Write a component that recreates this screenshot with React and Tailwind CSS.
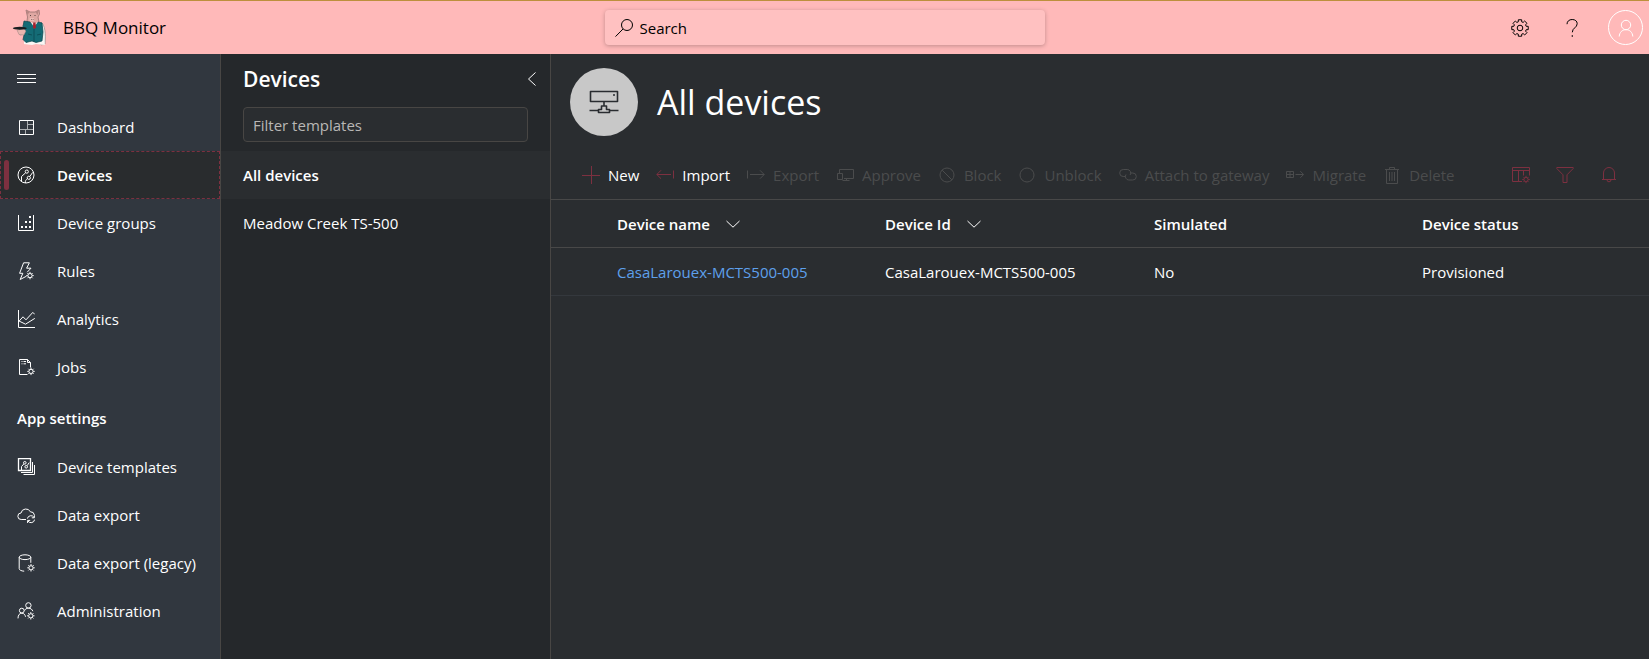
const Svg = ({ children, className = "size-[18px]", box = "0 0 18 18" }) => (
  <svg viewBox={box} className={`shrink-0 ${className}`} fill="none" stroke="currentColor" strokeWidth="1" aria-hidden="true">
    {children}
  </svg>
);

const SmallGear = ({ x, y }) => (
  <g transform={`translate(${x} ${y})`}>
    <circle r="2.1" />
    <path d="M0-2.3v-1.4M0 2.3v1.4M-2.3 0h-1.4M2.3 0h1.4M-1.6-1.6l-1-1M1.6-1.6l1-1M-1.6 1.6l-1 1M1.6 1.6l1 1" />
  </g>
);

const icons = {
  dashboard: (
    <>
      <path d="M2.5 2.5h14v14h-14z" />
      <path d="M10.5 3v8M3 11.5h13M11 6.5h5M8.5 12v4" opacity=".6" />
    </>
  ),
  devices: (
    <>
      <circle cx="9" cy="9" r="8" />
      <path d="M4.5 15.2V10.5L8.6 6.8M8.500 17c-.500-2 .300-3 1.900-4.400M12.900 10.400l2.800-4" />
      <circle cx="9.8" cy="5.6" r="1.6" />
      <circle cx="11.8" cy="11.8" r="1.6" />
    </>
  ),
  groups: (
    <>
      <path d="M1.5 1v15.5h15V1" />
      <path d="M4 12h2v2H4zM8 12h2v2H8zM12 12h2v2h-2zM8 7h2v2H8zM12 7h2v2h-2zM12 2h2v2h-2z" fill="currentColor" stroke="none" />
    </>
  ),
  rules: (
    <>
      <path d="M9.5 14.2L3.2 17.5l2.6-6.2H2.6L6.6.8h5.8L9.6 6.2h4.4l-3.8 4" />
      <SmallGear x="13" y="13.6" />
    </>
  ),
  analytics: (
    <>
      <path d="M1.5 0v17.5H18" />
      <path d="M2 11.2l4-4.4 3 3 6.8-7.4 2 2M2 11l6.5 3.2L17.8 8.4" />
    </>
  ),
  jobs: (
    <>
      <path d="M10.5 16.5h-8V1.5h8l3 3.2v4.8M10.5 1.5v3h3M4.5 3.5h1M6.5 3.5h2.5M4.5 5.8h1M6.5 5.8h2.5" />
      <SmallGear x="14" y="13.4" />
    </>
  ),
  templates: (
    <>
      <path d="M1.5.5h12v12h-12z" strokeWidth="1.3" />
      <path d="M4.500 12V8.500L6.800 6M10.200 7.600l2-3" />
      <circle cx="7.800" cy="4.800" r="1.300" />
      <circle cx="9.200" cy="8.800" r="1.300" />
      <path d="M4 14.5h11.5V4M6.5 16.5h11V7" />
    </>
  ),
  cloud: (
    <>
      <path d="M9 13.5H4.2A3.2 3.2 0 0 1 4 7a5 5 0 0 1 9.4-1.2A3.8 3.8 0 0 1 17.4 9" />
      <path d="M10.4 12.6a3.6 3.6 0 0 1 6.6-1.2M17.4 9.2v2.6h-2.6M17.6 13.6a3.6 3.6 0 0 1-6.6 1.4M10.6 17v-2.6h2.6" />
    </>
  ),
  database: (
    <>
      <ellipse cx="8" cy="3.2" rx="5.8" ry="2.4" />
      <path d="M2.2 3.2v11.4c0 1.4 2 2.4 5 2.6M13.8 3.2v5.6" />
      <SmallGear x="14" y="13.8" />
    </>
  ),
  admin: (
    <>
      <circle cx="11.4" cy="3.4" r="2.7" />
      <circle cx="4.8" cy="8.6" r="2.4" />
      <path d="M1 16.4c0-3.4 1.6-5.2 3.8-5.2s3.4 1.6 3.7 3.6M7.6 8.6c.6-1.6 2-2.4 3.8-2.4 2.4 0 3.8 1.2 4.4 3" />
      <SmallGear x="13.8" y="13.8" />
    </>
  ),
  menu: <path d="M0 1.5h19M0 5.5h19M0 9.5h19" />,
  plus: <path d="M9.500 0v18M0 9.500h18" />,
  import: <path d="M.8 8.5H15M5 4.3L.8 8.5 5 12.7M17.5 4.5v8" />,
  export: <path d="M17.2 8.5H3M13 4.3l4.2 4.2-4.2 4.2M.5 4.5v8" />,
  approve: <path d="M3.5 7V3.5h14v9H8M1.5 7.5h5v6h-5zM10.5 12.5v2M6.5 14.5h7" />,
  block: (
    <>
      <circle cx="9" cy="9" r="7" />
      <path d="M4.2 4.2l9.6 9.6" />
    </>
  ),
  unblock: <circle cx="9" cy="9" r="7" />,
  attach: (
    <>
      <path d="M6.500 10.500H4.200a3.500 3.500 0 0 1 0-7h4a3.500 3.500 0 0 1 2.900 5.500" />
      <path d="M11.500 7h2.300a3.500 3.500 0 0 1 0 7h-4A3.500 3.500 0 0 1 7 8.500" />
    </>
  ),
  migrate: <path d="M.5 5.5h7v6h-7zM4 5.5v6M.5 8.5h7M9.5 8.5h8M14.3 5.2l3.3 3.3-3.3 3.3" />,
  trash: <path d="M2 3.5h14M6.5 3.5v-2h5v2M3.5 3.5v14h11v-14M6.5 6v9M9 6v9M11.5 6v9" />,
  search: (
    <>
      <circle cx="12" cy="6" r="5.5" />
      <path d="M8 10L.5 17.6" />
    </>
  ),
  columns: (
    <>
      <path d="M10 15.5H.5v-14h17v8M.5 4.5h17M6.5 4.5v11M11.5 4.5v5" />
      <SmallGear x="14" y="13.5" />
    </>
  ),
  filter: <path d="M.8 1.5h16.400v1l-6.200 6.300v7.700H7V8.800L.8 2.500z" />,
  bell: <path d="M2 13.500h14M3.500 13.500V7a5.500 5.500 0 0 1 11 0v6.500M7 13.800a2 2 0 0 0 4 0" />,
  chevron: <path d="M.5 1l6.500 6.200L13.500 1" />,
  collapse: <path d="M7.500.5l-7 6.500 7 6.500" />,
};

const gearPath = (() => {
  const pts = [];
  for (let i = 0; i < 8; i++) {
    const a = (i * Math.PI) / 4;
    [[-0.27, 6.4], [-0.2, 8.4], [0.2, 8.4], [0.27, 6.4]].forEach(([d, r]) =>
      pts.push(`${(9 + r * Math.sin(a + d)).toFixed(2)} ${(9 - r * Math.cos(a + d)).toFixed(2)}`)
    );
  }
  return `M${pts.join("L")}Z`;
})();

const Logo = () => (
  <svg viewBox="4 5 36 38" className="h-[38px] w-9 shrink-0" aria-hidden="true">
    <path d="M17 19l-4 5-3 3 2 4 5-1 3-6zM33 18c4 3 5 12 4 22l-4 1-2-14z" fill="#eef1ef" stroke="#7d7f80" strokeWidth=".6" />
    <path d="M16 36h20l1 5-9-1-4 1-8-1z" fill="#fbf6f4" />
    <path d="M18 6l4 2h5l4-2 .5 4-1.500 3 1 5-3 3h-6l-3-4 .5-4z" fill="#dfa7a2" stroke="#8e6b69" strokeWidth=".7" />
    <path d="M18 6l3.500 2-2 3zM31 6l-3.500 2 2 3z" fill="#b98683" />
    <path d="M21.500 14h4.500v3h-4.500z" fill="#eebcb7" />
    <path d="M22 11.500h1M26.500 11.500h1M23 15.500h.6M24.800 15.500h.6" stroke="#473938" strokeWidth=".9" />
    <path d="M16 17l6 1 4 4 4-4 4 1 1 9-1 9-6 1.500-4-1.500-6 1.500-3-3 2-9-2-4z" fill="#146b75" stroke="#0c434b" strokeWidth=".7" />
    <path d="M22.500 18l3.500 5 4-5-2 1h-3z" fill="#f4eeee" />
    <path d="M25.200 18.500h2.300l.6 5-1.700 1.500-1.500-1.500z" fill="#a5232f" />
    <path d="M26 25v13M20 30l4 1M29 31l4-1" stroke="#0b4850" strokeWidth=".8" />
    <path d="M9 26l7-1 2 2-2 4-5-.500z" fill="#e8b5ae" stroke="#937b78" strokeWidth=".4" />
    <ellipse cx="11.800" cy="24.300" rx="7" ry="1.500" fill="#191d20" />
  </svg>
);

const mainNav = [
  ["Dashboard", "dashboard"],
  ["Devices", "devices"],
  ["Device groups", "groups"],
  ["Rules", "rules"],
  ["Analytics", "analytics"],
  ["Jobs", "jobs"],
];
const settingsNav = [
  ["Device templates", "templates"],
  ["Data export", "cloud"],
  ["Data export (legacy)", "database"],
  ["Administration", "admin"],
];
const commands = [
  ["New", "plus", true],
  ["Import", "import", true],
  ["Export", "export"],
  ["Approve", "approve"],
  ["Block", "block"],
  ["Unblock", "unblock"],
  ["Attach to gateway", "attach"],
  ["Migrate", "migrate"],
  ["Delete", "trash"],
];

function NavList({ items, active }) {
  return (
    <ul>
      {items.map(([label, icon]) => {
        const on = label === active;
        return (
          <li key={label}>
            <a
              href="#"
              aria-current={on ? "page" : undefined}
              className={
                on
                  ? "relative flex h-12 items-center gap-[22px] border border-dashed border-[#7d3040] bg-[#292c2e] pl-4 font-semibold"
                  : "flex h-12 items-center gap-[22px] pl-[17px]"
              }
            >
              {on && <span className="absolute left-[3px] h-[30px] w-[5px] rounded-sm bg-[#7d3040]" />}
              <Svg>{icons[icon]}</Svg>
              {label}
            </a>
          </li>
        );
      })}
    </ul>
  );
}

export default function App() {
  return (
    <div className="flex min-h-screen flex-col bg-[#2a2d30] font-['Open_Sans','Noto_Sans',sans-serif] text-[15px] leading-5 text-white">
      <header className="flex h-[54px] items-center border-t border-[#bd8f3c] bg-[#ffb9b9] px-[6px] text-black">
        <div className="flex flex-1 items-center">
          <div className="ml-[6px] flex items-center gap-[15px]">
            <Logo />
            <span className="text-[17px] font-medium">BBQ Monitor</span>
          </div>
        </div>
        <label className="flex h-[35px] w-[440px] items-center gap-[7px] rounded-sm bg-[#ffc1c1] px-[10px] shadow-[0_1px_4px_rgba(0,0,0,0.25)]">
          <Svg>{icons.search}</Svg>
          <input type="search" aria-label="Search" placeholder="Search" className="w-full bg-transparent outline-none placeholder:text-black" />
        </label>
        <div className="flex flex-1 items-center justify-end">
          <button aria-label="Settings" className="flex w-[52px] justify-center">
            <Svg>
              <path d={gearPath} />
              <circle cx="9" cy="9" r="2.800" />
            </Svg>
          </button>
          <button aria-label="Help" className="flex w-[52px] justify-center">
            <Svg>
              <path d="M4 5.200C4 2.300 6.200.500 9.200.500s5 1.700 5 4.200c0 4-4.900 4.100-4.900 8.600" />
              <path d="M8.700 16.300h1.200v1.500H8.700z" fill="currentColor" stroke="none" />
            </Svg>
          </button>
          <button aria-label="Account" className="ml-[10px] flex size-[35px] items-center justify-center rounded-full border border-white text-white">
            <Svg>
              <circle cx="9" cy="6" r="4.700" />
              <path d="M2.200 17.500c.300-4.200 3-6.800 6.800-6.800s6.500 2.600 6.800 6.800" />
            </Svg>
          </button>
        </div>
      </header>

      <div className="flex flex-1">
        <nav className="w-[221px] shrink-0 border-r border-[#484644] bg-[#31373f]">
          <button aria-label="Toggle navigation" className="flex h-[49px] items-center pl-[17px]">
            <Svg className="h-[11px] w-[19px]" box="0 0 19 11">{icons.menu}</Svg>
          </button>
          <NavList items={mainNav} active="Devices" />
          <h2 className="flex h-[52px] items-center pt-[2px] pl-[17px] font-semibold">App settings</h2>
          <NavList items={settingsNav} />
        </nav>

        <aside className="w-[330px] shrink-0 border-r border-[#484644] bg-[#25282b]">
          <div className="flex h-[49px] items-center justify-between pr-[14px] pl-[22px]">
            <h2 className="text-[21px] font-semibold">Devices</h2>
            <button aria-label="Collapse panel">
              <Svg className="h-[14px] w-2" box="0 0 8 14">{icons.collapse}</Svg>
            </button>
          </div>
          <div className="h-12 pt-1 pr-[22px] pl-[22px]">
            <input
              type="text"
              aria-label="Filter templates"
              placeholder="Filter templates"
              className="h-[35px] w-full rounded-sm border border-[#484644] bg-[#2a2d30] px-[9px] outline-none placeholder:text-[#b9b7b5]"
            />
          </div>
          <ul>
            <li>
              <a href="#" aria-current="true" className="flex h-12 items-center bg-[#2a2d30] pl-[22px] font-semibold">All devices</a>
            </li>
            <li>
              <a href="#" className="flex h-12 items-center pl-[22px]">Meadow Creek TS-500</a>
            </li>
          </ul>
        </aside>

        <main className="min-w-0 flex-1">
          <div className="flex h-24 items-center gap-[19px] pl-[19px]">
            <div className="flex size-[68px] items-center justify-center rounded-full bg-[#c8c8c8] text-[#292c30]">
              <Svg className="h-6 w-[30px]" box="0 0 30 24">
                <g strokeWidth="1.600">
                  <path d="M1.500 1.500h27v10h-27zM15 12v4M12.500 16h5v3.500h3v3h-11v-3h3zM.500 20.500h9M20.500 20.500h9" strokeLinejoin="round" />
                  <path d="M24 5h2" />
                </g>
              </Svg>
            </div>
            <h1 className="text-[34px] leading-10">All devices</h1>
          </div>

          <div className="flex h-[49px] items-center justify-between pr-[31px] pl-[31px]">
            <div className="flex items-center gap-[17px]">
              {commands.map(([label, icon, enabled]) => (
                <button
                  key={label}
                  disabled={!enabled}
                  className={
                    enabled
                      ? "flex items-center gap-2 whitespace-nowrap"
                      : "flex items-center gap-2 whitespace-nowrap text-[#4b4c4d]"
                  }
                >
                  <span className={enabled ? "text-[#7d3040]" : undefined}>
                    <Svg>{icons[icon]}</Svg>
                  </span>
                  {label}
                </button>
              ))}
            </div>
            <div className="flex gap-[26px] text-[#7d3040]">
              <button aria-label="Column options"><Svg>{icons.columns}</Svg></button>
              <button aria-label="Filter"><Svg>{icons.filter}</Svg></button>
              <button aria-label="Alerts"><Svg>{icons.bell}</Svg></button>
            </div>
          </div>

          <table className="w-full table-fixed text-left">
            <colgroup>
              <col className="w-[66px]" />
              <col className="w-[268px]" />
              <col className="w-[269px]" />
              <col className="w-[268px]" />
              <col />
            </colgroup>
            <thead>
              <tr className="h-12 border-y border-[#484848]">
                <td />
                {["Device name", "Device Id"].map((label) => (
                  <th key={label} className="font-semibold">
                    <button className="flex items-center gap-4">
                      {label}
                      <Svg className="h-2 w-[14px]" box="0 0 14 8">{icons.chevron}</Svg>
                    </button>
                  </th>
                ))}
                <th className="font-semibold">Simulated</th>
                <th className="font-semibold">Device status</th>
              </tr>
            </thead>
            <tbody>
              <tr className="h-12 border-b border-[#34383d]">
                <td />
                <td><a href="#" className="text-[#5ea0ec]">CasaLarouex-MCTS500-005</a></td>
                <td>CasaLarouex-MCTS500-005</td>
                <td>No</td>
                <td>Provisioned</td>
              </tr>
            </tbody>
          </table>
        </main>
      </div>
    </div>
  );
}
